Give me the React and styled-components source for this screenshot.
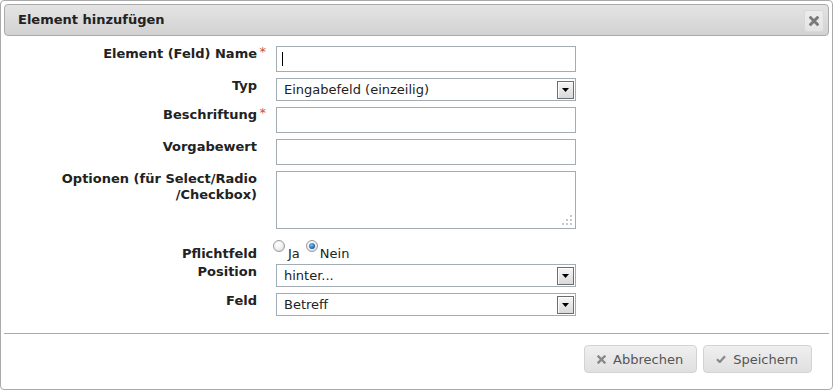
import React from "react";
import styled, { createGlobalStyle } from "styled-components";

const Global = createGlobalStyle`
  html, body { margin: 0; padding: 0; background: #fff; }
  body { font-family: "DejaVu Sans", Verdana, sans-serif; font-size: 13px; color: #222; }
  * { box-sizing: border-box; }
`;

const Dialog = styled.div`
  width: 833px;
  height: 390px;
  border: 1px solid #aaa;
  border-radius: 4px;
  padding: 3px;
  background: #fff;
  display: flex;
  flex-direction: column;
`;

const TitleBar = styled.div`
  height: 32px;
  border: 1px solid #aaa;
  border-radius: 4px;
  background: linear-gradient(#e4e4e4, #d2d2d2);
  display: flex;
  align-items: center;
  justify-content: space-between;
  padding: 0 4px 0 13px;
`;

const Title = styled.span`
  font-weight: bold;
  font-size: 13px;
  color: #222;
  margin-top: -1px;
`;

const CloseButton = styled.button`
  width: 20px;
  height: 22px;
  margin-top: 2px;
  border: 1px solid #d8d8d8;
  border-radius: 3px;
  background: linear-gradient(#ededed, #e3e3e3);
  display: flex;
  align-items: center;
  justify-content: center;
  padding: 0;
`;

const Form = styled.div`
  display: grid;
  grid-template-columns: 215px 300px;
  column-gap: 19px;
  row-gap: 6px;
  align-items: start;
  padding: 10px 0 0 38px;
`;

const Label = styled.div`
  position: relative;
  font-weight: bold;
  text-align: right;
  white-space: nowrap;
  line-height: 16px;
  color: #222;
  padding-top: ${(p) => p.$pad || 0}px;
  margin-bottom: ${(p) => p.$mb || 0}px;
`;

const Star = styled.span`
  position: absolute;
  right: -9px;
  top: -2px;
  color: #c4544a;
  font-weight: normal;
  font-size: 13px;
`;

const FieldWrap = styled.div`
  position: relative;
  width: 300px;
`;

const TextInput = styled.input`
  display: block;
  width: 300px;
  height: ${(p) => p.$h || 26}px;
  border: 1px solid #a3abb5;
  padding: 0 6px;
  font: inherit;
  outline: none;
  background: #fff;
`;

const Caret = styled.span`
  position: absolute;
  left: 6px;
  top: 6px;
  width: 1px;
  height: 14px;
  background: #000;
`;

const TextArea = styled.textarea`
  display: block;
  width: 300px;
  height: 58px;
  border: 1px solid #a3abb5;
  resize: none;
  font: inherit;
  outline: none;
  padding: 4px 6px;
`;

const Grip = styled.svg`
  position: absolute;
  right: 3px;
  bottom: 3px;
`;

const SelectBox = styled.div`
  width: 300px;
  height: 23px;
  border: 1px solid #a3abb5;
  display: flex;
  align-items: center;
  justify-content: space-between;
  padding: 0 1px 0 7px;
  background: #fff;
  color: #222;
`;

const SelectText = styled.span`
  line-height: 15px;
`;

const ArrowBtn = styled.span`
  width: 17px;
  height: 18px;
  border: 1px solid #6d6d6d;
  box-shadow: inset 1px 1px 0 #fff;
  background: linear-gradient(#f6f6f6, #d9d9d9);
  display: flex;
  align-items: center;
  justify-content: center;
`;

const RadioGroup = styled.div`
  display: flex;
  align-items: flex-start;
  height: 23px;
`;

const Radio = styled.span`
  width: 12px;
  height: 12px;
  margin-top: 5px;
  margin-left: ${(p) => p.$ml || 0}px;
  border-radius: 50%;
  border: 1px solid #9a9a9a;
  background: radial-gradient(circle at 40% 35%, #fff 0%, #f2f2f2 45%, #cfcfcf 100%);
  display: flex;
  align-items: center;
  justify-content: center;
  &::after {
    content: "";
    display: ${(p) => (p.$checked ? "block" : "none")};
    width: 6px;
    height: 6px;
    border-radius: 50%;
    background: radial-gradient(circle at 40% 35%, #7fc1f0 0%, #1c6fb6 60%, #0c3e73 100%);
  }
`;

const RadioText = styled.span`
  margin-top: 11px;
  margin-left: ${(p) => p.$ml || 0}px;
  line-height: 15px;
  color: #222;
`;

const ButtonPane = styled.div`
  margin-top: 17px;
  border-top: 1px solid #aaa;
  padding: 11px 17px 0 0;
  display: flex;
  justify-content: flex-end;
  gap: 6px;
`;

const Button = styled.button`
  height: 28px;
  border: 1px solid #d3d3d3;
  border-radius: 4px;
  background: linear-gradient(#efefef, #e0e0e0);
  color: #555;
  font: inherit;
  font-size: 13px;
  display: flex;
  align-items: center;
  gap: 7px;
  padding: 0 13px 0 12px;
`;

const XIcon = ({ size = 8, color = "#888", w = 2.4 }) => (
  <svg width={size} height={size} viewBox="0 0 9 9">
    <path d="M1.5 1.5 L7.5 7.5 M7.5 1.5 L1.5 7.5" stroke={color} strokeWidth={w} strokeLinecap="square" />
  </svg>
);

const CheckIcon = () => (
  <svg width="10" height="8" viewBox="0 0 10 8">
    <path d="M1 4.2 L3.8 7 L9 1.2" stroke="#888" strokeWidth="2.2" fill="none" />
  </svg>
);

const Arrow = () => (
  <svg width="7" height="4" viewBox="0 0 7 4">
    <path d="M0 0 H7 L3.5 4 Z" fill="#000" />
  </svg>
);

const Select = ({ value }) => (
  <SelectBox>
    <SelectText>{value}</SelectText>
    <ArrowBtn>
      <Arrow />
    </ArrowBtn>
  </SelectBox>
);

export default function App() {
  return (
    <>
      <Global />
      <Dialog>
        <TitleBar>
          <Title>Element hinzufügen</Title>
          <CloseButton aria-label="close">
            <XIcon size={10} color="#7a7a7a" w={2.6} />
          </CloseButton>
        </TitleBar>
        <Form>
          <Label>
            Element (Feld) Name<Star>*</Star>
          </Label>
          <FieldWrap>
            <TextInput />
            <Caret />
          </FieldWrap>

          <Label>Typ</Label>
          <Select value="Eingabefeld (einzeilig)" />

          <Label>
            Beschriftung<Star>*</Star>
          </Label>
          <TextInput />

          <Label>Vorgabewert</Label>
          <TextInput />

          <Label>
            Optionen (für Select/Radio
            <br />
            /Checkbox)
          </Label>
          <FieldWrap>
            <TextArea />
            <Grip width="11" height="11" viewBox="0 0 11 11">
              <rect x="8" y="0" width="2" height="2" fill="#c8c8c8" />
              <rect x="4" y="4" width="2" height="2" fill="#c8c8c8" />
              <rect x="8" y="4" width="2" height="2" fill="#c8c8c8" />
              <rect x="0" y="8" width="2" height="2" fill="#c8c8c8" />
              <rect x="4" y="8" width="2" height="2" fill="#c8c8c8" />
              <rect x="8" y="8" width="2" height="2" fill="#c8c8c8" />
            </Grip>
          </FieldWrap>

          <Label $pad={11} $mb={-4}>
            Pflichtfeld
          </Label>
          <RadioGroup>
            <Radio $ml={-3} />
            <RadioText $ml={3}>Ja</RadioText>
            <Radio $ml={6} $checked />
            <RadioText $ml={2}>Nein</RadioText>
          </RadioGroup>

          <Label>Position</Label>
          <Select value="hinter..." />

          <Label>Feld</Label>
          <Select value="Betreff" />
        </Form>
        <ButtonPane>
          <Button>
            <XIcon size={9} />
            Abbrechen
          </Button>
          <Button>
            <CheckIcon />
            Speichern
          </Button>
        </ButtonPane>
      </Dialog>
    </>
  );
}
